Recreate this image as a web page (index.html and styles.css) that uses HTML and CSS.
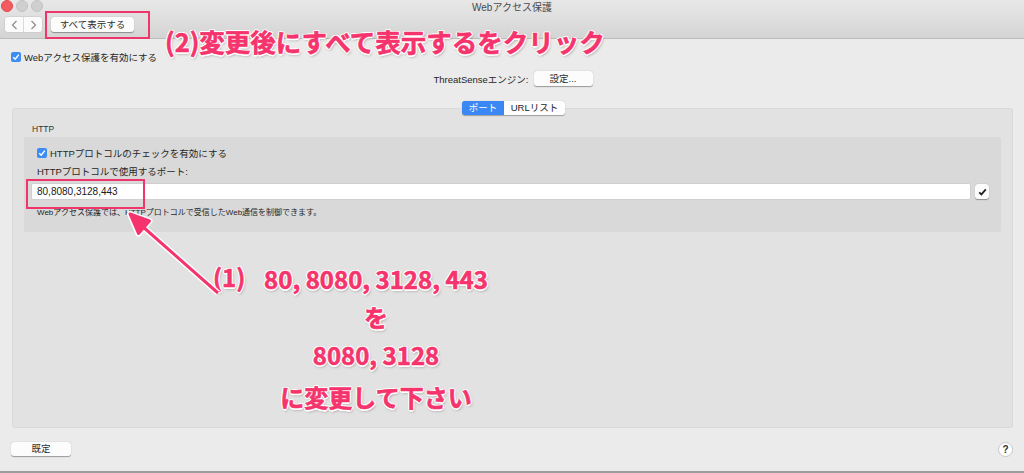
FILE: index.html
```html
<!DOCTYPE html>
<html lang="ja">
<head>
    <meta charset="UTF-8">
    <meta name="viewport" content="width=device-width, initial-scale=1.0">
    <title>Webアクセス保護</title>
    <link rel="stylesheet" href="styles.css">
</head>
<body>

<div class="window">
    <header class="toolbar">
        <div class="titlebar">
            <div class="lights">
                <span class="light red"></span>
                <span class="light"></span>
                <span class="light"></span>
            </div>
            <div class="title">Webアクセス保護</div>
        </div>
        <div class="tools">
            <div class="nav">
                <button class="nav-btn">
                    <svg width="7" height="10" viewBox="0 0 7 10"><path d="M5.5 1 1.5 5l4 4" fill="none" stroke="#8c8c8c" stroke-width="1.2"/></svg>
                </button>
                <button class="nav-btn">
                    <svg width="7" height="10" viewBox="0 0 7 10"><path d="M1.5 1l4 4-4 4" fill="none" stroke="#8c8c8c" stroke-width="1.2"/></svg>
                </button>
            </div>
            <button class="mac-btn show-all">すべて表示する</button>
        </div>
    </header>

    <main class="content">
        <label class="check main-check"><span class="box">
            <svg width="8" height="8" viewBox="0 0 8 8"><path d="M1.2 4.2 3.2 6.2 6.8 1.6" fill="none" stroke="#fff" stroke-width="1.5"/></svg>
        </span>Webアクセス保護を有効にする</label>

        <div class="engine">
            <span>ThreatSenseエンジン:</span>
            <button class="mac-btn settings">設定...</button>
        </div>

        <div class="tabbox">
            <div class="tabs">
                <span class="tab active">ポート</span>
                <span class="tab">URLリスト</span>
            </div>
            <div class="panel">
                <div class="group-title">HTTP</div>
                <div class="group">
                    <label class="check"><span class="box">
                        <svg width="8" height="8" viewBox="0 0 8 8"><path d="M1.2 4.2 3.2 6.2 6.8 1.6" fill="none" stroke="#fff" stroke-width="1.5"/></svg>
                    </span>HTTPプロトコルのチェックを有効にする</label>
                    <div class="field-label">HTTPプロトコルで使用するポート:</div>
                    <div class="field-row">
                        <input class="ports" type="text" value="80,8080,3128,443">
                        <button class="apply">
                            <svg width="9" height="8" viewBox="0 0 9 8"><path d="M1.2 4.4 3.4 6.4 7.8 1.4" fill="none" stroke="#222" stroke-width="1.8"/></svg>
                        </button>
                    </div>
                    <p class="help">Webアクセス保護では、HTTPプロトコルで受信したWeb通信を制御できます。</p>
                </div>
            </div>
        </div>
    </main>

    <footer class="bottom">
        <button class="mac-btn defaults">既定</button>
        <button class="help-btn">?</button>
    </footer>

    <!-- 手順の注記 -->
    <div class="mark mark-showall"></div>
    <div class="mark mark-ports"></div>
    <div class="note note-top">(2)変更後にすべて表示するをクリック</div>
    <div class="note note-num">(1)</div>
    <div class="note note-steps">
        <div>80, 8080, 3128, 443</div>
        <div>を</div>
        <div>8080, 3128</div>
        <div class="last">に変更して下さい</div>
    </div>
    <svg class="arrow" width="1024" height="473" viewBox="0 0 1024 473">
        <g stroke="#fff" stroke-width="6" stroke-linejoin="round" fill="#fff">
            <line x1="218" y1="293" x2="142" y2="226"/>
            <polygon points="130,214 149.5,221 138.5,233.5"/>
        </g>
        <g stroke="#f5336c" stroke-width="3" stroke-linejoin="round" fill="#f5336c">
            <line x1="218" y1="293" x2="142" y2="226"/>
            <polygon points="130,214 149.5,221 138.5,233.5"/>
        </g>
    </svg>
</div>

</body>
</html>
```

FILE: styles.css
```css
* {
    box-sizing: border-box;
}

body {
    margin: 0;
    font-family: 'Liberation Sans', 'Noto Sans CJK JP', sans-serif;
    font-size: 9.5px;
    color: #262626;
}

button {
    font-family: inherit;
}

.window {
    position: relative;
    width: 1024px;
    height: 473px;
    overflow: hidden;
    background-color: #ebebeb;
    display: flex;
    flex-direction: column;
    border-bottom: 2px solid #9c9c9c;
}

/* ツールバー */
.toolbar {
    height: 39px;
    flex: none;
    background: linear-gradient(#e8e8e8, #d4d4d4);
    border-bottom: 1px solid #bdbdbd;
    padding: 0 5px;
}

.titlebar {
    position: relative;
    height: 13px;
}

.lights {
    position: absolute;
    left: -4px;
    top: 0;
    display: flex;
    gap: 3px;
}

.light {
    width: 12px;
    height: 12px;
    border-radius: 50%;
    background-color: #cfcfcf;
    border: 1px solid #c2c2c2;
}

.light.red {
    background-color: #f45a5f;
    border-color: #df4a4f;
}

.title {
    text-align: center;
    font-size: 10px;
    line-height: 15px;
    color: #4a4a4a;
}

.tools {
    display: flex;
    align-items: center;
    gap: 9px;
    margin-top: 4px;
}

.nav {
    display: flex;
    gap: 1px;
    box-shadow: 0 0 0 0.5px #c4c4c4;
    border-radius: 3px;
}

.nav-btn {
    width: 18px;
    height: 15px;
    padding: 0;
    border: none;
    background-color: #fbfbfb;
    display: flex;
    align-items: center;
    justify-content: center;
}

.nav-btn:first-child {
    border-radius: 3px 0 0 3px;
}

.nav-btn:last-child {
    border-radius: 0 3px 3px 0;
}

.mac-btn {
    height: 15px;
    padding: 0;
    border: none;
    border-radius: 3px;
    background-color: #fcfcfc;
    box-shadow: 0 0.5px 1px rgba(0, 0, 0, 0.35);
    font-size: 9.5px;
    line-height: 15px;
    color: #2e2e2e;
}

.show-all {
    width: 83px;
}

/* 本体 */
.content {
    flex: 1;
    padding: 12px 11px 0;
}

.check {
    display: flex;
    align-items: center;
    gap: 3px;
    height: 12px;
    white-space: nowrap;
}

.box {
    width: 10px;
    height: 10px;
    border-radius: 2px;
    background-color: #3b8cf5;
    display: flex;
    align-items: center;
    justify-content: center;
}

.engine {
    display: flex;
    justify-content: center;
    align-items: center;
    gap: 5px;
    margin-top: 8px;
    padding-left: 2px;
}

.settings {
    width: 59px;
}

.tabbox {
    margin-top: 15px;
    margin-left: 1px;
}

.tabs {
    position: relative;
    z-index: 1;
    display: flex;
    justify-content: center;
    padding-left: 2px;
}

.tab {
    height: 14px;
    line-height: 14px;
    font-size: 9.5px;
    text-align: center;
    background-color: #fdfdfd;
    box-shadow: 0 0.5px 1px rgba(0, 0, 0, 0.3);
    color: #262626;
}

.tab:first-child {
    width: 42px;
    border-radius: 3px 0 0 3px;
}

.tab:last-child {
    width: 61px;
    border-radius: 0 3px 3px 0;
}

.tab.active {
    background-color: #3b87f3;
    color: #fff;
}

.panel {
    margin-top: -7px;
    height: 320px;
    background-color: #e2e2e2;
    border: 1px solid #d9d9d9;
    border-radius: 3px;
    padding: 15px 11px 0;
}

.group-title {
    font-size: 8.5px;
    line-height: 10px;
    padding-left: 8px;
    color: #333;
}

.group {
    margin-top: 3px;
    background-color: #d9d9d9;
    border-radius: 2px;
    padding: 10px 12px 14px 8px;
}

.group .check {
    margin-left: 5px;
}

.field-label {
    margin-top: 7px;
    margin-left: 5px;
    line-height: 12px;
}

.field-row {
    display: flex;
    align-items: center;
    gap: 5px;
    margin-top: 6px;
}

.ports {
    flex: 1;
    height: 15px;
    border: none;
    border-radius: 1px;
    box-shadow: 0 0 0 0.5px #c8c8c8;
    background-color: #fff;
    padding: 0 5px;
    font-family: 'Liberation Sans', sans-serif;
    font-size: 10px;
    color: #1a1a1a;
}

.apply {
    width: 14px;
    height: 15px;
    padding: 0;
    border: none;
    border-radius: 3px;
    background-color: #fcfcfc;
    box-shadow: 0 0.5px 1px rgba(0, 0, 0, 0.35);
    display: flex;
    align-items: center;
    justify-content: center;
}

.help {
    margin: 9px 0 0 5px;
    font-size: 8px;
    line-height: 10px;
    color: #262626;
}

/* 下部ボタン */
.bottom {
    flex: none;
    height: 43px;
    display: flex;
    justify-content: space-between;
    align-items: flex-start;
    padding: 14px 11px 0 11px;
}

.defaults {
    width: 60px;
    height: 14px;
    line-height: 14px;
}

.help-btn {
    width: 15px;
    height: 15px;
    padding: 0;
    border: 1px solid #c6c6c6;
    border-radius: 50%;
    background-color: #fff;
    font-size: 10px;
    font-weight: bold;
    color: #333;
    line-height: 13px;
}

/* 注記 */
.mark {
    position: absolute;
    border: 2px solid #f0356c;
}

.mark-showall {
    left: 45px;
    top: 11px;
    width: 105px;
    height: 28px;
}

.mark-ports {
    left: 26px;
    top: 179px;
    width: 119px;
    height: 30px;
}

.note {
    position: absolute;
    font-family: 'Noto Sans CJK JP', sans-serif;
    font-weight: bold;
    color: #f5336c;
    -webkit-text-stroke: 0.6px #f5336c;
    white-space: nowrap;
    text-shadow:
        1.5px 0 0 #fff, -1.5px 0 0 #fff, 0 1.5px 0 #fff, 0 -1.5px 0 #fff,
        1px 1px 0 #fff, -1px -1px 0 #fff, 1px -1px 0 #fff, -1px 1px 0 #fff,
        1px 2px 3px rgba(0, 0, 0, 0.35);
}

.note-top {
    left: 165px;
    top: 24px;
    font-size: 25.5px;
    line-height: 34px;
}

.note-num {
    left: 213px;
    top: 260px;
    font-size: 24px;
    line-height: 34px;
}

.note-steps {
    left: 256px;
    top: 260px;
    width: 240px;
    text-align: center;
    font-size: 24px;
    line-height: 38px;
}

.note-steps .last {
    margin-top: 4px;
}

.arrow {
    position: absolute;
    left: 0;
    top: 0;
    pointer-events: none;
}
```
